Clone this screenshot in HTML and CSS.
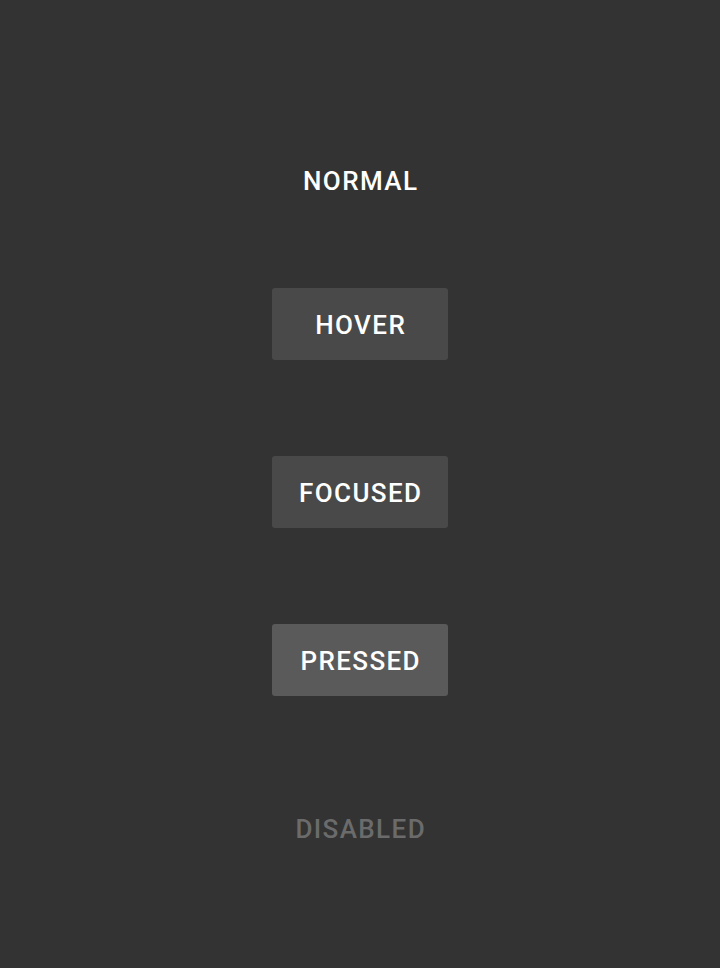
FILE: index.html
```html
<!DOCTYPE html>
<html>
<head>
<meta charset="utf-8">
<link rel="stylesheet" href="styles.css">
</head>
<body>
<div class="stack">
  <button class="btn normal">NORMAL</button>
  <button class="btn hover">HOVER</button>
  <button class="btn focused">FOCUSED</button>
  <button class="btn pressed">PRESSED</button>
  <button class="btn disabled">DISABLED</button>
</div>
</body>
</html>
```

FILE: styles.css
```css
html, body {
  margin: 0;
  padding: 0;
  background: #333333;
  height: 100%;
}
.stack {
  display: flex;
  flex-direction: column;
  align-items: center;
  padding-top: 144px;
}
.btn {
  width: 176px;
  height: 72px;
  border: none;
  border-radius: 3px;
  background: transparent;
  color: #ffffff;
  font-family: Roboto, "Liberation Sans", sans-serif;
  font-weight: 500;
  font-size: 26px;
  letter-spacing: 1.4px;
  padding: 1px 0 0 1.4px;
  margin: 0 0 96px 0;
  display: flex;
  align-items: center;
  justify-content: center;
}
.normal { margin-bottom: 72px; }
.hover { background: #494949; }
.focused { background: #494949; }
.pressed { background: #5a5a5a; }
.disabled { color: #6b6b6b; }
```
